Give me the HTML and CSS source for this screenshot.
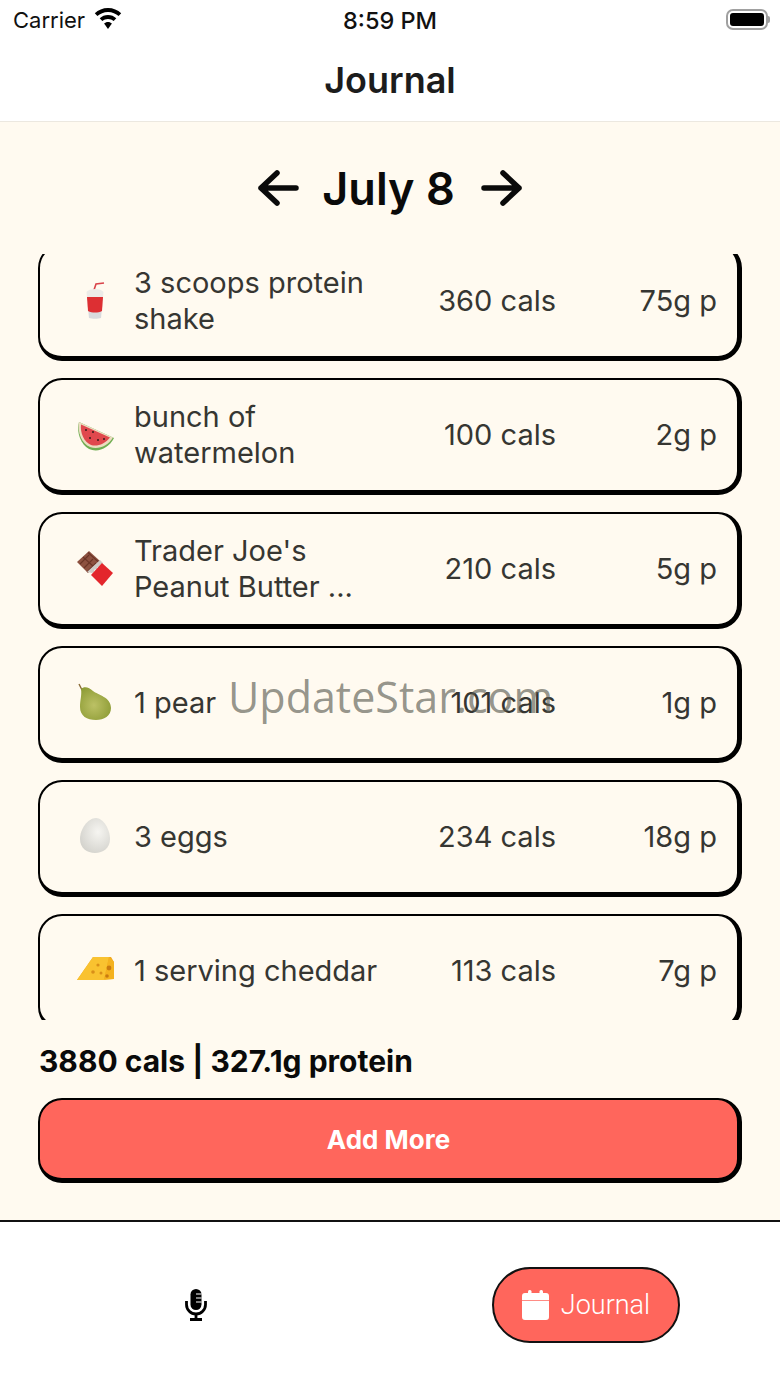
FILE: index.html
```html
<!DOCTYPE html>
<html lang="en">
<head>
  <meta charset="UTF-8">
  <title>Journal</title>
  <link rel="stylesheet" href="styles.css">
</head>
<body>
  <div class="app">
    <div class="status-bar">
      <div class="status-left">
        <span>Carrier</span>
        <svg class="wifi" width="28" height="21" viewBox="0 0 28 21">
          <path d="M14 0C8.800 0 4.200 2 .8 5.300l2.600 2.800C6.100 5.500 9.800 3.900 14 3.900s7.900 1.600 10.600 4.200l2.600-2.800C23.800 2 19.200 0 14 0z"/>
          <path d="M14 7C10.800 7 7.900 8.200 5.700 10.300l2.600 2.800C9.800 11.700 11.800 10.900 14 10.900s4.200.8 5.700 2.200l2.600-2.800C20.100 8.200 17.200 7 14 7z"/>
          <path d="M14 14c-1.500 0-2.900.6-3.900 1.500L14 21l3.900-5.500C16.900 14.600 15.500 14 14 14z"/>
        </svg>
      </div>
      <div class="status-time">8:59 PM</div>
      <div class="status-right">
        <div class="battery"><div class="battery-fill"></div></div>
        <div class="battery-tip"></div>
      </div>
    </div>

    <div class="nav-bar">Journal</div>

    <div class="content">
      <div class="date-row">
        <svg width="42" height="38" viewBox="0 0 42 38" class="arrow">
          <path d="M39 19H4M20 4L4 19l16 15"/>
        </svg>
        <div class="date-title">July 8</div>
        <svg width="42" height="38" viewBox="0 0 42 38" class="arrow arrow-next">
          <path d="M3 19h35M22 4l16 15-16 15"/>
        </svg>
      </div>

      <div class="list-clip">
        <div class="list">
          <div class="food-card">
            <svg class="emoji" width="40" height="40" viewBox="0 0 40 40">
              <path d="M18 9l2-6 8-1" fill="none" stroke="#d9434a" stroke-width="1.600"/>
              <path d="M11 16l-.5-5C13 7 25 7 27.500 11l-.5 5z" fill="#ecebe8"/>
              <path d="M11 16h16l-2 21c-3 1-9 1-12 0z" fill="#d9dadd"/>
              <path d="M11 16h16l-1 14c-4 2-10 2-14 0z" fill="#dd2f33"/>
            </svg>
            <div class="food-name">3 scoops protein shake</div>
            <div class="food-cals">360 cals</div>
            <div class="food-protein">75g p</div>
          </div>
          <div class="food-card">
            <svg class="emoji" width="40" height="40" viewBox="0 0 40 40">
              <path d="M3 7L38 23C33 33 22 38 13 34 5 30 0 17 3 7z" fill="#6fae52"/>
              <path d="M3 7L37 22.500C32 31 22 35 14 32 6 29 1 17 3 7z" fill="#ecdcc0"/>
              <path d="M5 9.500L34 22.500C29 29 21 32 15 30 8 27 4 18 5 9.500z" fill="#e0484d"/>
              <circle cx="10" cy="15" r="1" fill="#3a1a1a"/>
              <circle cx="17" cy="17" r="1" fill="#3a1a1a"/>
              <circle cx="14" cy="23" r="1" fill="#3a1a1a"/>
              <circle cx="22" cy="25" r="1" fill="#3a1a1a"/>
              <circle cx="28" cy="24" r="1" fill="#3a1a1a"/>
            </svg>
            <div class="food-name">bunch of watermelon</div>
            <div class="food-cals">100 cals</div>
            <div class="food-protein">2g p</div>
          </div>
          <div class="food-card">
            <svg class="emoji" width="40" height="40" viewBox="0 0 40 40">
              <path d="M13 2L1 13l11 11 12-12z" fill="#8d5140"/>
              <path d="M7 8l11 10M12 3.500l11 10M4 15l9-9M8 19l9-9M11 23l9-9" stroke="#6b3527" stroke-width="1.100" fill="none"/>
              <path d="M11 23l13-12 3 3-1.500 1.500-1 2-3 .5-.5 2-2.500.5-.5 2.500-2 1z" fill="#cfcbc6"/>
              <path d="M15 26l11-12 11 10-11 13z" fill="#e3262c"/>
            </svg>
            <div class="food-name">Trader Joe's Peanut Butter ...</div>
            <div class="food-cals">210 cals</div>
            <div class="food-protein">5g p</div>
          </div>
          <div class="food-card">
            <svg class="emoji" width="40" height="40" viewBox="0 0 40 40">
              <defs>
                <radialGradient id="pearFill" cx="0.45" cy="0.55" r="0.65">
                  <stop offset="0" stop-color="#bcc165"/>
                  <stop offset="1" stop-color="#8b9a33"/>
                </radialGradient>
              </defs>
              <path d="M3 1l3 6" stroke="#8a6a35" stroke-width="1.400" fill="none"/>
              <path d="M5 6C8 3 13 4 17 8 22 12 35 14 35 25 35 33 28 37 20 37 11 37 4 33 4 24 4 17 6 12 5 6z" fill="url(#pearFill)"/>
            </svg>
            <div class="food-name">1 pear</div>
            <div class="food-cals">101 cals</div>
            <div class="food-protein">1g p</div>
          </div>
          <div class="food-card">
            <svg class="emoji" width="40" height="40" viewBox="0 0 40 40">
              <defs>
                <radialGradient id="eggFill" cx="0.6" cy="0.4" r="0.7">
                  <stop offset="0" stop-color="#f6f5f1"/>
                  <stop offset="1" stop-color="#d2d1cb"/>
                </radialGradient>
              </defs>
              <path d="M20 1C27 1 34 12 34 22 34 31 27 36 19 36 11 36 4 31 4 22 4 12 12 1 20 1z" fill="url(#eggFill)"/>
            </svg>
            <div class="food-name">3 eggs</div>
            <div class="food-cals">234 cals</div>
            <div class="food-protein">18g p</div>
          </div>
          <div class="food-card">
            <svg class="emoji" width="40" height="40" viewBox="0 0 40 40">
              <path d="M1 29L17 6h18l3 5v17z" fill="#f2a81d"/>
              <path d="M1 29L17 6h16l-5 23z" fill="#f9c230"/>
              <path d="M28 29l5-23 5 5v17z" fill="#f4b21f"/>
              <circle cx="33" cy="17" r="2.400" fill="#c97a10"/>
              <circle cx="31" cy="25" r="1.800" fill="#c97a10"/>
              <circle cx="22" cy="14" r="1.600" fill="#d98f18"/>
              <circle cx="17" cy="21" r="1.800" fill="#d98f18"/>
              <circle cx="25" cy="22" r="1.500" fill="#d98f18"/>
            </svg>
            <div class="food-name">1 serving cheddar</div>
            <div class="food-cals">113 cals</div>
            <div class="food-protein">7g p</div>
          </div>
        </div>
      </div>

      <div class="summary">3880 cals | 327.1g protein</div>
      <div class="add-btn">Add More</div>
    </div>

    <div class="tab-bar">
      <div class="tab-item">
        <svg width="22" height="32" viewBox="0 0 22 32">
          <rect x="5.500" y="0" width="11" height="21" rx="5.500"/>
          <path d="M1.500 12v3.500a9.500 9.500 0 0 0 19 0V12" fill="none" stroke="#000" stroke-width="2.800"/>
          <path d="M11 25v4M5 30.500h12" stroke="#000" stroke-width="2.800" fill="none"/>
          <path d="M11 5h5.500M11 9h5.500M11 13h5.500" stroke="#fff" stroke-width="1.200"/>
        </svg>
      </div>
      <div class="tab-pill">
        <svg width="27" height="30" viewBox="0 0 27 30">
          <path d="M3 3h21a3 3 0 0 1 3 3v4H0V6a3 3 0 0 1 3-3zM0 10.700h27V27a3 3 0 0 1-3 3H3a3 3 0 0 1-3-3z" fill="#fff"/>
          <rect x="6" y="0" width="3.500" height="5" rx="1.500" fill="#fff"/>
          <rect x="17.500" y="0" width="3.500" height="5" rx="1.500" fill="#fff"/>
        </svg>
        <span>Journal</span>
      </div>
    </div>

    <div class="watermark">UpdateStar.com</div>
  </div>
</body>
</html>
```

FILE: styles.css
```css
body {
  margin: 0;
  font-family: 'Inter', 'Liberation Sans', sans-serif;
  background-color: #fff;
  color: #000;
}

.app {
  position: relative;
  width: 780px;
  height: 1387px;
  display: flex;
  flex-direction: column;
  overflow: hidden;
}

.status-bar {
  height: 40px;
  display: grid;
  grid-template-columns: 1fr auto 1fr;
  align-items: center;
  padding: 0 10px 0 13px;
  font-size: 22px;
  color: #111;
}

.status-left {
  display: flex;
  align-items: center;
  gap: 9px;
}

.wifi {
  margin-top: -3px;
}

.status-time {
  font-size: 23.5px;
  font-weight: 500;
  margin-left: -3px;
}

.status-right {
  display: flex;
  justify-content: flex-end;
  align-items: center;
  margin-top: -2px;
}

.battery {
  width: 42px;
  height: 21px;
  box-sizing: border-box;
  padding: 2px;
  border: 2px solid #a0a0a0;
  border-radius: 7px;
}

.battery-fill {
  height: 100%;
  background: #000;
  border-radius: 3px;
}

.battery-tip {
  width: 2px;
  height: 7px;
  background: #a0a0a0;
  border-radius: 0 2px 2px 0;
}

.nav-bar {
  height: 79px;
  padding-bottom: 2px;
  display: flex;
  align-items: center;
  justify-content: center;
  font-size: 36px;
  font-weight: 600;
  color: #1c1c1c;
  border-bottom: 1px solid #ece8e0;
}

.content {
  height: 1100px;
  background: #fffaf0;
  border-bottom: 2px solid #111;
  box-sizing: border-box;
  display: flex;
  flex-direction: column;
  padding: 0 38px;
}

.date-row {
  height: 132px;
  flex-shrink: 0;
  display: flex;
  align-items: center;
  justify-content: center;
  gap: 23px;
  font-size: 45px;
  font-weight: 600;
  color: #0a0a0a;
}

.arrow {
  fill: none;
  stroke: #0a0a0a;
  stroke-width: 5.500;
  stroke-linecap: round;
  stroke-linejoin: round;
}

.arrow-next {
  margin-left: 3px;
}

.list-clip {
  height: 766px;
  flex-shrink: 0;
  overflow: hidden;
}

.list {
  margin-top: -10px;
  display: flex;
  flex-direction: column;
  gap: 17px;
}

.food-card {
  height: 117px;
  box-sizing: border-box;
  flex-shrink: 0;
  display: flex;
  align-items: center;
  background: #fffaf0;
  border: 2px solid #000;
  border-right-width: 5px;
  border-bottom-width: 5px;
  border-radius: 24px;
  padding: 0 20px 0 36px;
  font-size: 29px;
  line-height: 36px;
  color: #363632;
}

.emoji {
  flex-shrink: 0;
  margin-right: 18px;
}

.food-name {
  width: 250px;
  flex-shrink: 0;
}

.food-cals {
  flex: 1;
  text-align: right;
}

.food-protein {
  width: 161px;
  flex-shrink: 0;
  text-align: right;
}

.summary {
  margin-top: 23px;
  font-size: 30px;
  line-height: 36px;
  font-weight: 700;
  color: #0a0a0a;
  padding-left: 1px;
}

.add-btn {
  margin-top: 19px;
  height: 85px;
  box-sizing: border-box;
  display: flex;
  align-items: center;
  justify-content: center;
  background: #ff665c;
  border: 2px solid #000;
  border-right-width: 5px;
  border-bottom-width: 5px;
  border-radius: 24px;
  color: #fff;
  font-size: 26px;
  font-weight: 700;
}

.tab-bar {
  flex: 1;
  display: flex;
  align-items: center;
  justify-content: space-between;
  padding: 0 100px 0 185px;
}

.tab-item {
  display: flex;
  align-items: center;
}

.tab-pill {
  width: 188px;
  height: 76px;
  box-sizing: border-box;
  display: flex;
  align-items: center;
  justify-content: center;
  gap: 12px;
  background: #ff665c;
  border: 2px solid #111;
  border-radius: 38px;
  color: #fff;
  font-family: 'Roboto', 'Liberation Sans', sans-serif;
  font-size: 27px;
  font-weight: 300;
}

.watermark {
  position: absolute;
  left: 228px;
  top: 667px;
  font-family: 'Open Sans', 'Liberation Sans', sans-serif;
  font-size: 43px;
  line-height: 60px;
  color: rgba(90, 90, 80, 0.65);
  white-space: nowrap;
}
```
